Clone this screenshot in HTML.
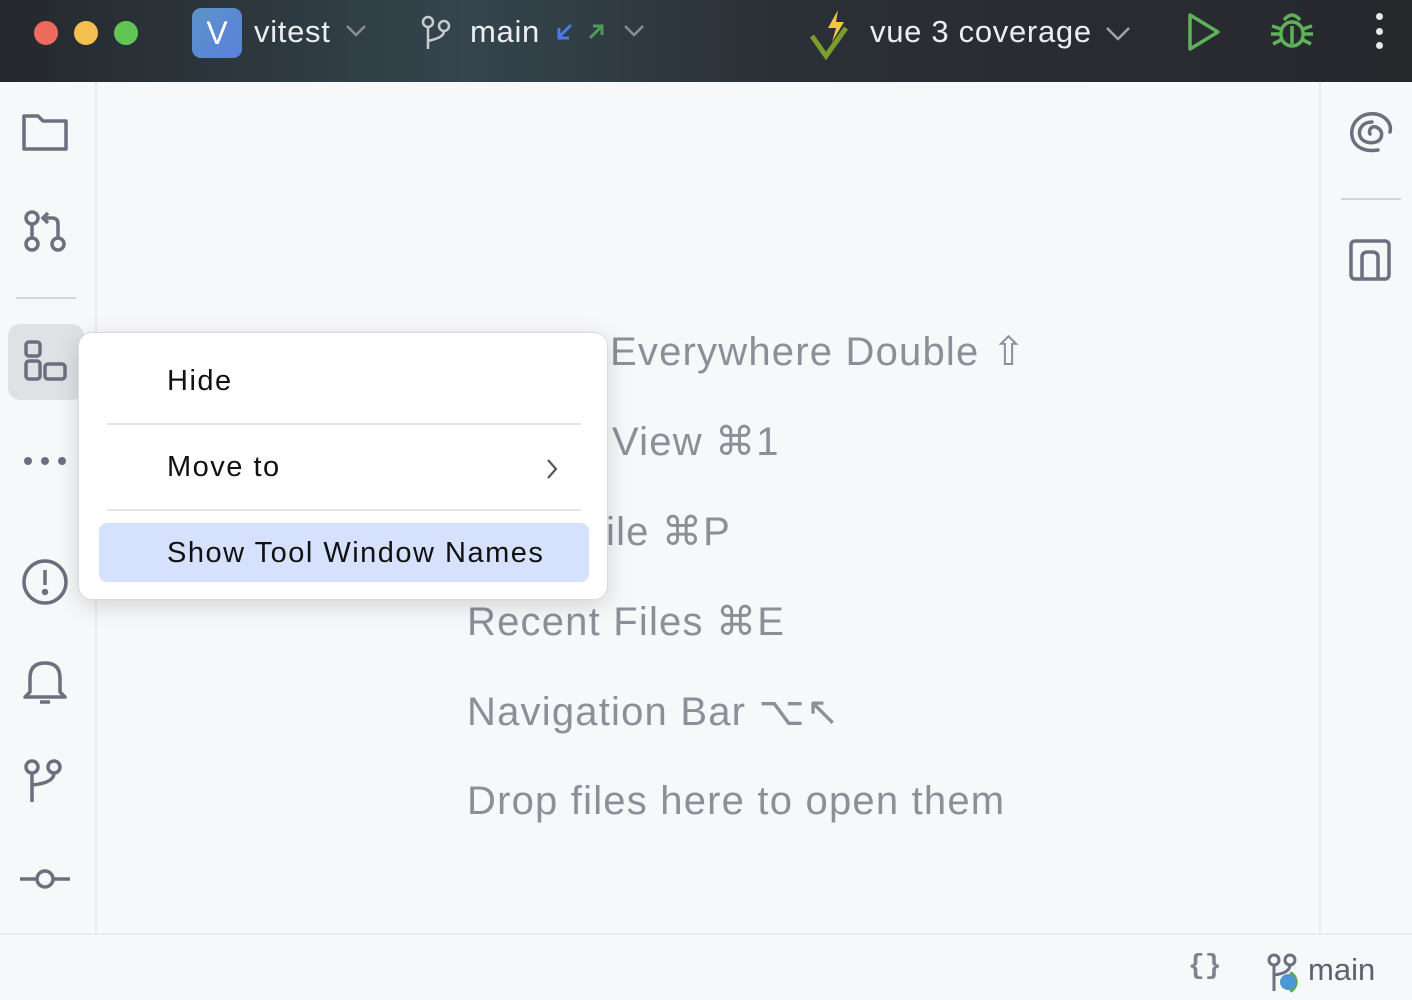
<!DOCTYPE html>
<html><head><meta charset="utf-8"><style>
*{margin:0;padding:0;box-sizing:border-box}
body{width:1412px;height:1000px;overflow:hidden;background:#f7f8fa;font-family:"Liberation Sans",sans-serif;position:relative}
.title{position:absolute;left:0;top:0;width:1412px;height:82px;background:linear-gradient(90deg,#25282c 0%,#34454d 33%,#2b3036 55%,#26282c 100%)}
.abs{position:absolute}
.tt{color:#eceef1;font-size:31px;position:absolute;top:14px;letter-spacing:.7px}
.left{position:absolute;left:0;top:82px;width:97px;height:851px;border-right:2px solid #ebecf0}
.right{position:absolute;left:1319px;top:82px;width:93px;height:851px;border-left:2px solid #ebecf0}
.status{position:absolute;left:0;top:933px;width:1412px;height:67px;border-top:2px solid #ebecf0}
.m{position:absolute;color:#8c8f98;font-size:40px;white-space:nowrap;letter-spacing:1.2px}
.pop{position:absolute;left:78px;top:332px;width:530px;height:268px;background:#fff;border:1px solid #d8dade;border-radius:14px;box-shadow:0 6px 24px rgba(0,0,0,.15)}
.it{position:absolute;left:88px;font-size:29px;color:#111;letter-spacing:1.5px}
.sep{position:absolute;left:28px;width:474px;height:2px;background:#e4e5e8}
svg{position:absolute}
</style></head><body>
<div class="title">
 <div class="abs" style="left:34px;top:21px;width:24px;height:24px;border-radius:50%;background:#ee6a5e"></div>
 <div class="abs" style="left:74px;top:21px;width:24px;height:24px;border-radius:50%;background:#f5bf4f"></div>
 <div class="abs" style="left:114px;top:21px;width:24px;height:24px;border-radius:50%;background:#61c554"></div>
 <div class="abs" style="left:192px;top:8px;width:50px;height:50px;border-radius:9px;background:linear-gradient(135deg,#5b94c8,#5b7fdc);color:#fff;font-size:32px;text-align:center;line-height:50px">V</div>
 <div class="tt" style="left:254px">vitest</div>
 <svg style="left:345px;top:24px" width="22" height="14"><path d="M2 2l9 9 9-9" stroke="#8a8e94" stroke-width="2.5" fill="none"/></svg>
 <svg style="left:420px;top:14px" width="34" height="36" fill="none" stroke="#c8ccd0" stroke-width="2.5"><circle cx="8" cy="8" r="5"/><circle cx="24" cy="12" r="5"/><path d="M8 13v22M24 17c0 6-8 8-16 10"/></svg>
 <div class="tt" style="left:470px">main</div>
 <svg style="left:555px;top:22px" width="20" height="20"><path d="M16 3L4 15M4 6v10h10" stroke="#4a7be8" stroke-width="3" fill="none"/></svg>
 <svg style="left:586px;top:22px" width="20" height="20"><path d="M4 16L16 4M7 4h9v9" stroke="#4e9a56" stroke-width="3" fill="none"/></svg>
 <svg style="left:623px;top:24px" width="22" height="14"><path d="M2 2l9 9 9-9" stroke="#8a8e94" stroke-width="2.5" fill="none"/></svg>
 <svg style="left:808px;top:8px" width="54" height="52"><path d="M4 28l14 20 20-28" stroke="#7a9d2c" stroke-width="5" fill="none"/><path d="M30 2l-10 18h8l-4 14 12-20h-8z" fill="#f2c543"/></svg>
 <div class="tt" style="left:870px">vue 3 coverage</div>
 <svg style="left:1105px;top:26px" width="26" height="16"><path d="M2 2l11 11 11-11" stroke="#a0a4a8" stroke-width="2.5" fill="none"/></svg>
 <svg style="left:1186px;top:12px" width="36" height="40"><path d="M4 3v34l28-17z" stroke="#5fb15a" stroke-width="3.5" fill="none" stroke-linejoin="round"/></svg>
 <svg style="left:1270px;top:10px" width="44" height="42" fill="none" stroke="#5fb15a" stroke-width="3.5"><path d="M14 10q8-10 16 0"/><rect x="11" y="12" width="22" height="24" rx="11"/><path d="M2 16l9 3M42 16l-9 3M1 24h10M43 24H33M3 34l8-4M41 34l-8-4M22 16v18"/></svg>
 <div class="abs" style="left:1376px;top:13px;width:7px;height:7px;border-radius:50%;background:#e8e8e8"></div>
 <div class="abs" style="left:1376px;top:28px;width:7px;height:7px;border-radius:50%;background:#e8e8e8"></div>
 <div class="abs" style="left:1376px;top:42px;width:7px;height:7px;border-radius:50%;background:#e8e8e8"></div>
</div>
<div class="left">
 <svg style="left:22px;top:30px" width="46" height="40" fill="none" stroke="#6c707e" stroke-width="3.5" stroke-linejoin="round"><path d="M2 4h14l5 5h23v28H2z"/></svg>
 <svg style="left:22px;top:128px" width="46" height="46" fill="none" stroke="#6c707e" stroke-width="3.5"><circle cx="10" cy="8" r="6"/><circle cx="10" cy="34" r="6"/><circle cx="36" cy="34" r="6"/><path d="M10 14v14M36 28V14q0-6-6-6h-6M26 3l-5 5 5 5"/></svg>
 <div class="abs" style="left:16px;top:215px;width:60px;height:2px;background:#d3d5da"></div>
 <div class="abs" style="left:8px;top:242px;width:76px;height:76px;border-radius:12px;background:#dfe1e5"></div>
 <svg style="left:23px;top:257px" width="46" height="46" fill="none" stroke="#6c707e" stroke-width="3.5"><rect x="3" y="3" width="14" height="14" rx="3"/><rect x="3" y="22" width="14" height="18" rx="3"/><rect x="22" y="25" width="20" height="15" rx="3"/></svg>
 <div class="abs" style="left:24px;top:375px;width:8px;height:8px;border-radius:50%;background:#6c707e"></div>
 <div class="abs" style="left:41px;top:375px;width:8px;height:8px;border-radius:50%;background:#6c707e"></div>
 <div class="abs" style="left:58px;top:375px;width:8px;height:8px;border-radius:50%;background:#6c707e"></div>
 <svg style="left:21px;top:476px" width="48" height="48" fill="none" stroke="#6c707e" stroke-width="3.5"><circle cx="24" cy="24" r="21"/><path d="M24 12v15"/><circle cx="24" cy="34" r="1.5" fill="#6c707e"/></svg>
 <svg style="left:22px;top:576px" width="46" height="48" fill="none" stroke="#6c707e" stroke-width="3.5" stroke-linejoin="round"><path d="M8 34V20q0-15 15-15t15 15v14l5 5H3z"/><path d="M18 44h10"/></svg>
 <svg style="left:22px;top:676px" width="46" height="48" fill="none" stroke="#6c707e" stroke-width="3.5"><circle cx="10" cy="9" r="6"/><circle cx="32" cy="9" r="6"/><path d="M10 15v29M32 15q0 10-22 12"/></svg>
 <svg style="left:18px;top:785px" width="54" height="24" fill="none" stroke="#6c707e" stroke-width="3.5"><circle cx="27" cy="12" r="8"/><path d="M2 12h17M35 12h17"/></svg>
</div>
<div class="right">
 <svg style="left:27px;top:28px" width="46" height="46" fill="none" stroke="#6c707e" stroke-width="3.5" stroke-linecap="round"><path d="M28 4C12 2 2 14 4 26s14 16 26 14M24 12C14 12 10 20 12 26s10 8 16 6 8-10 2-14-10 2-8 6"/><path d="M28 4c10 2 16 10 14 18"/></svg>
 <div class="abs" style="left:20px;top:116px;width:60px;height:2px;background:#d3d5da"></div>
 <svg style="left:27px;top:156px" width="46" height="46" fill="none" stroke="#6c707e" stroke-width="3.5"><rect x="3" y="3" width="38" height="38" rx="4"/><path d="M14 41V19q0-5 6-5h4q6 0 6 5v22"/></svg>
</div>
<div class="m" style="left:610px;top:329px">Everywhere Double ⇧</div>
<div class="m" style="left:612px;top:419px">View ⌘1</div>
<div class="m" style="left:606px;top:509px">ile ⌘P</div>
<div class="m" style="left:467px;top:599px">Recent Files ⌘E</div>
<div class="m" style="left:467px;top:689px">Navigation Bar ⌥↖</div>
<div class="m" style="left:467px;top:779px">Drop files here to open them</div>
<div class="pop">
 <div class="it" style="top:32px">Hide</div>
 <div class="sep" style="top:90px"></div>
 <div class="it" style="top:118px">Move to</div>
 <svg style="left:466px;top:124px" width="14" height="24"><path d="M3 3l8 9-8 9" stroke="#555" stroke-width="2.2" fill="none"/></svg>
 <div class="sep" style="top:176px"></div>
 <div class="abs" style="left:20px;top:190px;width:490px;height:59px;border-radius:8px;background:#d5e1fd"></div>
 <div class="it" style="top:204px">Show Tool Window Names</div>
</div>
<div class="status">
 <div class="abs" style="left:1188px;top:16px;font-size:28px;color:#7f838c;font-weight:bold;font-family:'Liberation Mono',monospace">{}</div>
 <svg style="left:1266px;top:18px" width="40" height="40" fill="none" stroke="#6c707e" stroke-width="3"><circle cx="8" cy="7" r="5"/><circle cx="24" cy="7" r="5"/><path d="M8 12v26M24 12q0 8-16 10"/><path d="M24 20a10 10 0 0 1 0 18" stroke="#5aa855" stroke-width="4"/><circle cx="22" cy="29" r="8" fill="#4c97d5" stroke="none"/></svg>
 <div class="abs" style="left:1308px;top:17px;font-size:31px;color:#5e626c">main</div>
</div>
</body></html>
